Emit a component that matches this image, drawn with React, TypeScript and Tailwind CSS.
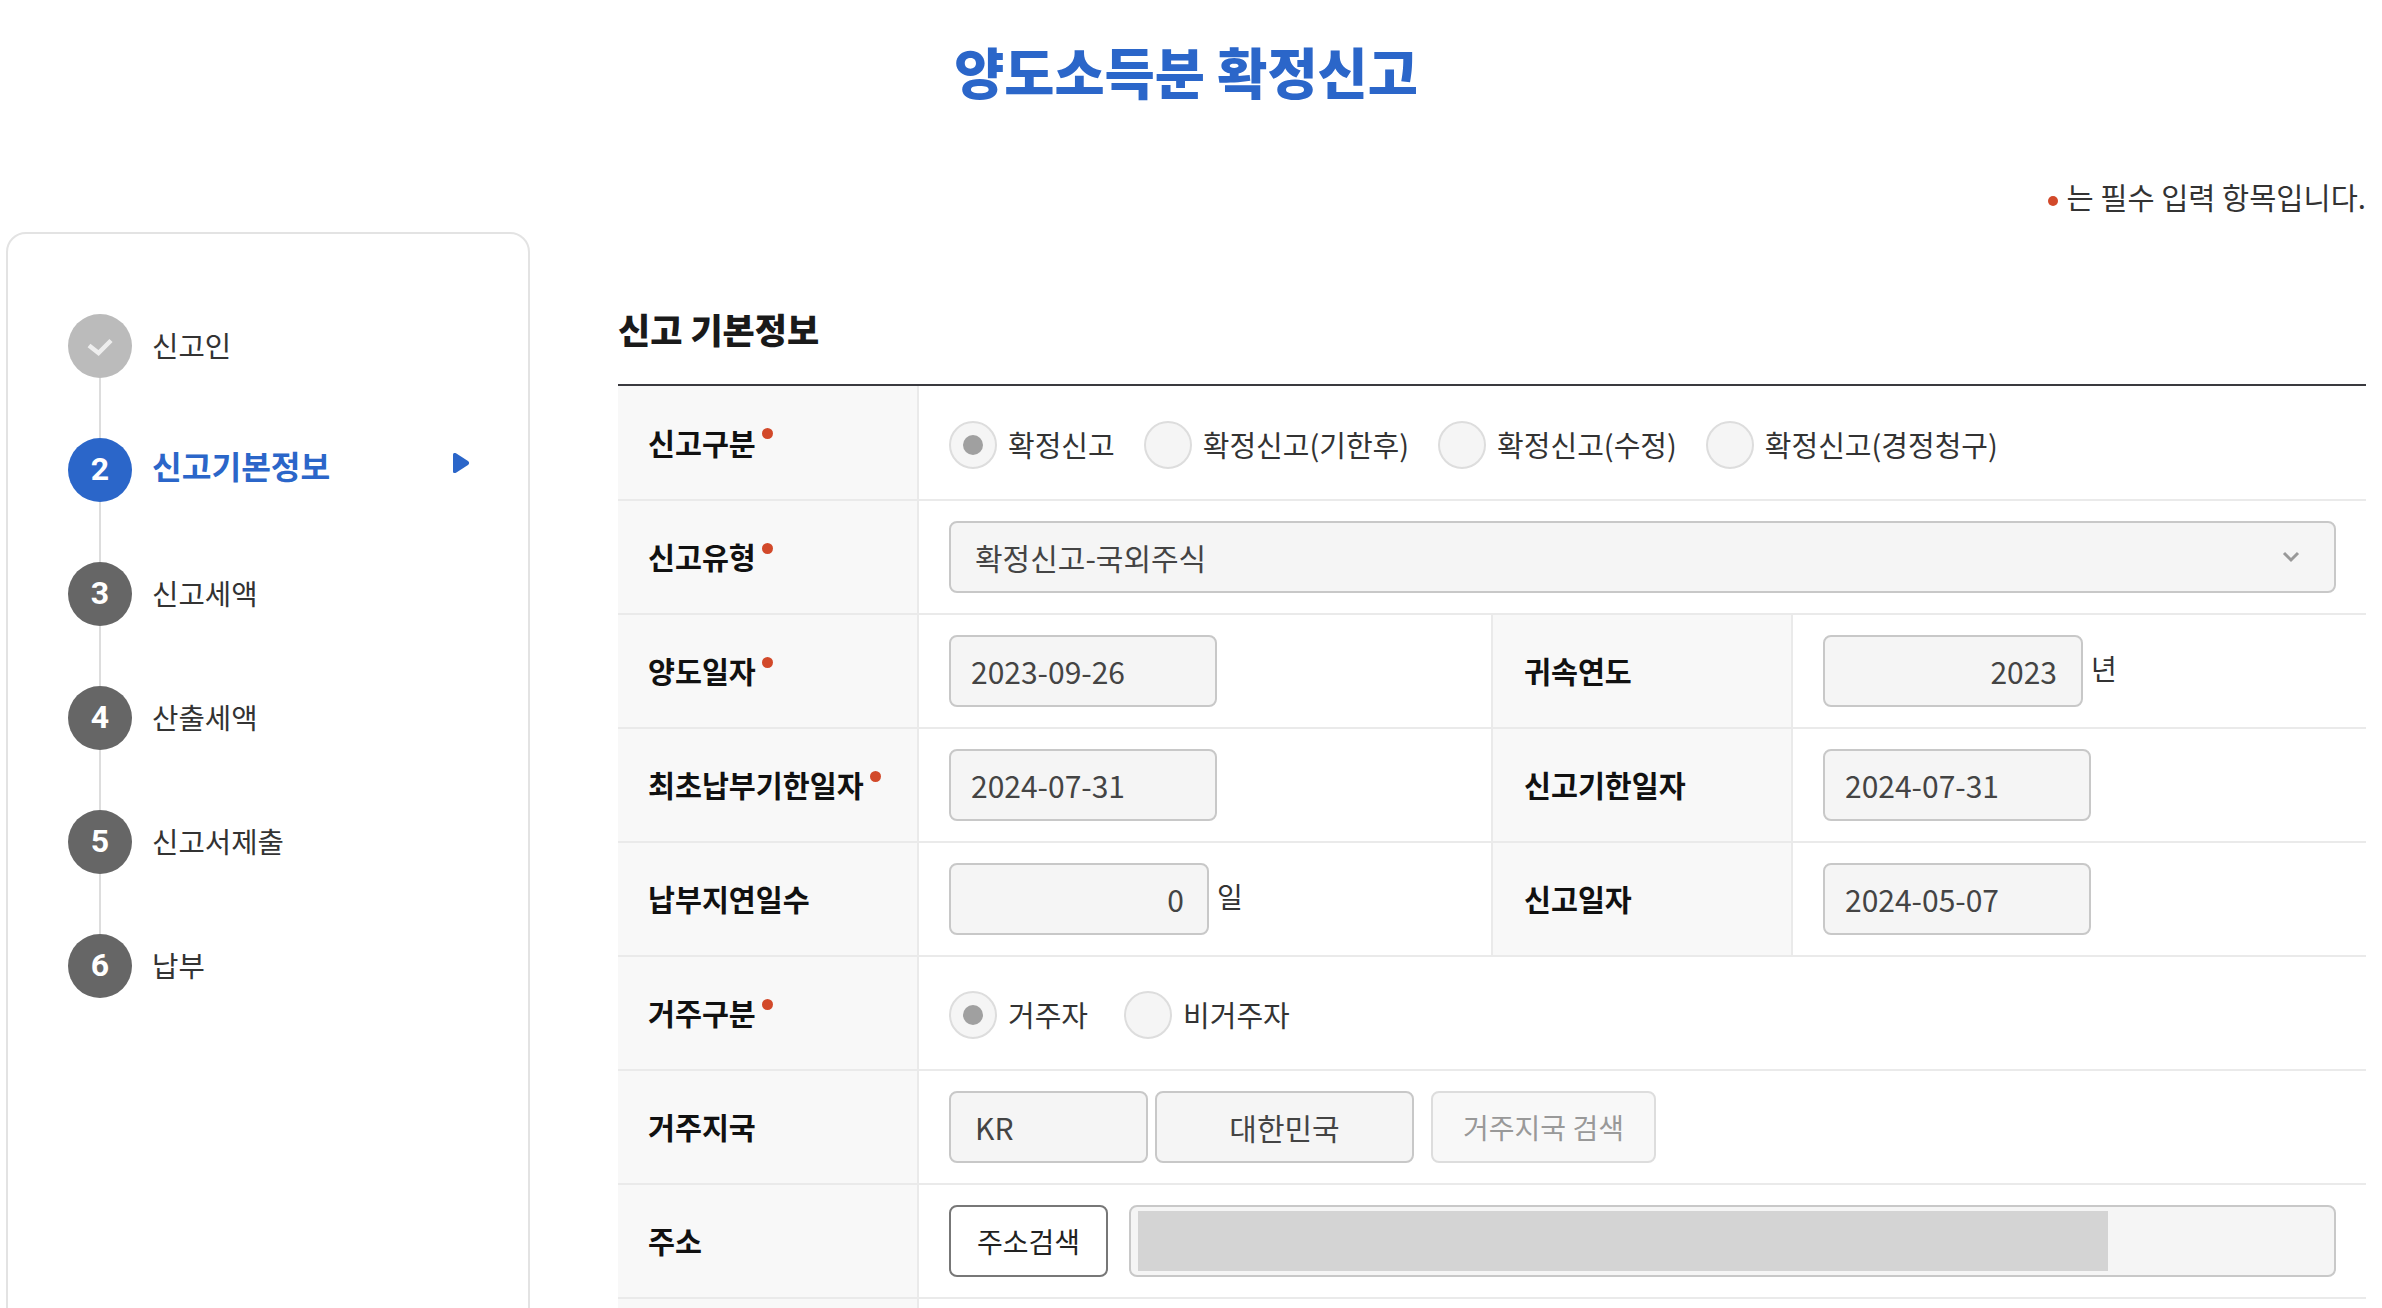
import type { ReactNode } from 'react'

const STEPS = [
  { key: 'done', label: '신고인' },
  { key: '2', label: '신고기본정보' },
  { key: '3', label: '신고세액' },
  { key: '4', label: '산출세액' },
  { key: '5', label: '신고서제출' },
  { key: '6', label: '납부' },
]

function Dot() {
  return <span className="ml-[6px] inline-block size-[11px] -translate-y-[9px] rounded-full bg-[#d2492a]" />
}

function Label({ text, required, wide }: { text: string; required?: boolean; wide?: boolean }) {
  return (
    <div
      className={`flex h-full shrink-0 items-center bg-[#f8f8f8] text-[29.3px] font-bold text-[#111] ${
        wide ? 'w-[302px] border-x-2 border-[#eaeaea] pl-[31px]' : 'w-[301px] border-r-2 border-[#eaeaea] pl-[30px]'
      }`}
    >
      {text}
      {required && <Dot />}
    </div>
  )
}

function Field({ children, className = '' }: { children?: ReactNode; className?: string }) {
  return (
    <div
      className={`flex h-[72px] items-center rounded-lg border-2 border-[#c8c8c8] bg-[#f5f5f5] text-[30px] text-[#444] ${className}`}
    >
      {children}
    </div>
  )
}

function Radio({ label, checked, className = '' }: { label: string; checked?: boolean; className?: string }) {
  return (
    <div className={`mt-[4px] flex items-center ${className}`}>
      <span className="flex size-[48px] items-center justify-center rounded-full border-2 border-[#dddddd] bg-[#f5f5f5]">
        {checked && <span className="size-[20px] rounded-full bg-[#a0a0a0]" />}
      </span>
      <span className="ml-[11px] text-[29px] text-[#333]">{label}</span>
    </div>
  )
}

function Row({ children, className = 'h-[114px]' }: { children: ReactNode; className?: string }) {
  return <div className={`flex items-center border-b-2 border-[#eaeaea] ${className}`}>{children}</div>
}

function Cell({ children, className = '' }: { children: ReactNode; className?: string }) {
  return <div className={`flex items-center pl-[30px] ${className}`}>{children}</div>
}

function Step({ step, index }: { step: (typeof STEPS)[number]; index: number }) {
  const active = index === 1
  const done = index === 0
  return (
    <div className="flex">
      <div className="flex w-[64px] flex-col items-center">
        <span
          className={`flex size-[64px] items-center justify-center rounded-full pb-[2px] font-['Roboto',sans-serif] text-[32px] font-bold text-white ${
            done ? 'bg-[#bbbbbb]' : active ? 'bg-[#2b66c9]' : 'bg-[#666666]'
          }`}
        >
          {done ? (
            <svg className="mt-[4px]" width="26" height="20" viewBox="0 0 26 20" fill="none">
              <path d="M2 8.5l9.5 7.5L24 3.5" stroke="#eeeeee" strokeWidth="4.5" />
            </svg>
          ) : (
            step.key
          )}
        </span>
        {index < STEPS.length - 1 && <span className="h-[60px] w-[2px] bg-[#dddddd]" />}
      </div>
      <div
        className={`ml-[20px] flex items-center ${
          active ? 'h-[54px] text-[32.3px] font-bold text-[#2b66c9]' : 'h-[62px] text-[28.7px] text-[#333]'
        }`}
      >
        {step.label}
      </div>
      {active && (
        <svg className="mt-[14px] ml-[122px]" width="18" height="22" viewBox="0 0 18 22">
          <path d="M1 2.5C1 1 2.5 0.5 4 1.3L16 9c1.5 1 1.5 3 0 4L4 20.7C2.5 21.5 1 21 1 19.5z" fill="#2b66c9" />
        </svg>
      )}
    </div>
  )
}

export default function App() {
  return (
    <div className="h-[1308px] w-[2382px] overflow-hidden bg-white font-['Noto_Sans_CJK_KR','Noto_Sans',sans-serif]">
      <div className="ml-[6px] w-[2360px]">
        <h1 className="flex h-[150px] items-center justify-center pb-[8px] text-[54.5px] font-black text-[#2b66c9]">
          양도소득분 확정신고
        </h1>
        <p className="flex h-[82px] items-start justify-end pt-[23px] text-[29.5px] leading-[46px] text-[#333]">
          <span className="mt-[23px] mr-[9px] size-[10px] rounded-full bg-[#d2492a]" />는 필수 입력 항목입니다.
        </p>

        <div className="flex">
          <aside className="h-[1200px] w-[524px] shrink-0 rounded-t-[20px] border-2 border-[#e3e3e3] pt-[80px] pl-[60px]">
            {STEPS.map((step, index) => (
              <Step key={step.key} step={step} index={index} />
            ))}
          </aside>

          <main className="ml-[88px] flex-1">
            <h2 className="flex h-[152px] items-start pt-[67px] text-[35px] leading-[60px] font-black text-[#1a1a1a]">
              신고 기본정보
            </h2>
            <div className="h-[2px] bg-[#3a3a3f]" />

            <Row className="h-[115px]">
              <Label text="신고구분" required />
              <Cell>
                <Radio label="확정신고" checked />
                <Radio label="확정신고(기한후)" className="ml-[29px]" />
                <Radio label="확정신고(수정)" className="ml-[29px]" />
                <Radio label="확정신고(경정청구)" className="ml-[29px]" />
              </Cell>
            </Row>

            <Row>
              <Label text="신고유형" required />
              <Cell className="flex-1 pr-[30px]">
                <Field className="flex-1 justify-between pr-[34px] pl-[24px]">
                  확정신고-국외주식
                  <svg width="18" height="12" viewBox="0 0 18 12" fill="none">
                    <path d="M2 2l7 7 7-7" stroke="#999999" strokeWidth="3" />
                  </svg>
                </Field>
              </Cell>
            </Row>

            <Row>
              <Label text="양도일자" required />
              <Cell className="w-[572px]">
                <Field className="w-[268px] pl-[20px]">2023-09-26</Field>
              </Cell>
              <Label text="귀속연도" wide />
              <Cell>
                <Field className="w-[260px] justify-end pr-[24px]">2023</Field>
                <span className="mb-[6px] ml-[8px] text-[28px] text-[#333]">년</span>
              </Cell>
            </Row>

            <Row>
              <Label text="최초납부기한일자" required />
              <Cell className="w-[572px]">
                <Field className="w-[268px] pl-[20px]">2024-07-31</Field>
              </Cell>
              <Label text="신고기한일자" wide />
              <Cell>
                <Field className="w-[268px] pl-[20px]">2024-07-31</Field>
              </Cell>
            </Row>

            <Row>
              <Label text="납부지연일수" />
              <Cell className="w-[572px]">
                <Field className="w-[260px] justify-end pr-[23px]">0</Field>
                <span className="mb-[6px] ml-[8px] text-[28px] text-[#333]">일</span>
              </Cell>
              <Label text="신고일자" wide />
              <Cell>
                <Field className="w-[268px] pl-[20px]">2024-05-07</Field>
              </Cell>
            </Row>

            <Row>
              <Label text="거주구분" required />
              <Cell>
                <Radio label="거주자" checked />
                <Radio label="비거주자" className="ml-[36px]" />
              </Cell>
            </Row>

            <Row>
              <Label text="거주지국" />
              <Cell>
                <Field className="w-[199px] pl-[24px]">KR</Field>
                <Field className="ml-[7px] w-[259px] justify-center">대한민국</Field>
                <button
                  type="button"
                  className="ml-[17px] flex h-[72px] w-[225px] items-center justify-center rounded-lg border-2 border-[#dddddd] bg-[#f8f8f8] text-[28px] text-[#999999]"
                >
                  거주지국 검색
                </button>
              </Cell>
            </Row>

            <Row>
              <Label text="주소" />
              <Cell className="flex-1 pr-[30px]">
                <button
                  type="button"
                  className="flex h-[72px] w-[159px] items-center justify-center rounded-lg border-2 border-[#777777] bg-white text-[28px] text-[#222]"
                >
                  주소검색
                </button>
                <div className="ml-[21px] h-[72px] flex-1 rounded-lg border-2 border-[#c8c8c8] bg-[#f5f5f5] py-[4px] pl-[7px]">
                  <div className="h-full w-[970px] bg-[#d4d4d4]" />
                </div>
              </Cell>
            </Row>

            <Row>
              <Label text="" />
            </Row>
          </main>
        </div>
      </div>
    </div>
  )
}
